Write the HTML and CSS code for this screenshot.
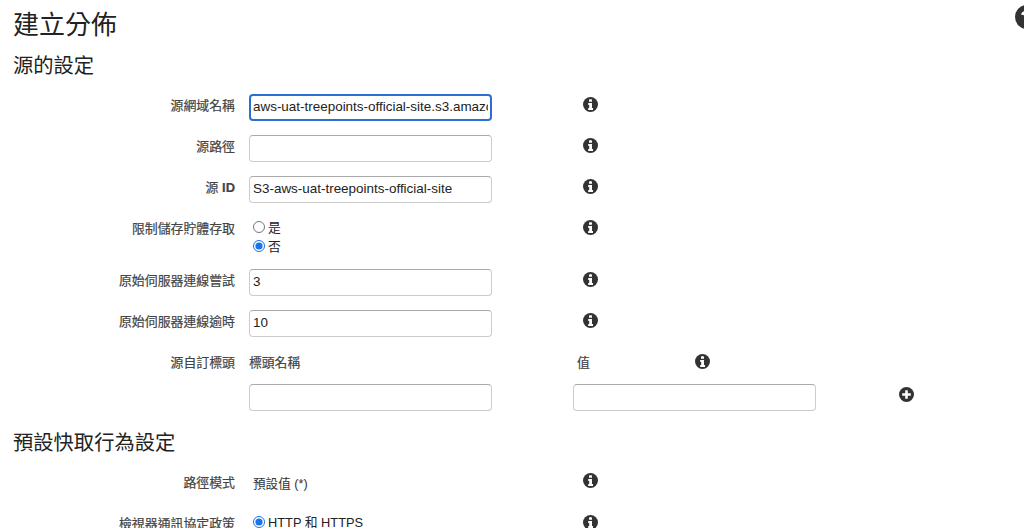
FILE: index.html
```html
<!DOCTYPE html>
<html lang="zh-Hant">

<head>
  <meta charset="UTF-8" />
  <title>建立分佈</title>
  <link rel="stylesheet" href="styles.css">
</head>

<body>
  <svg class="icon-defs" width="0" height="0">
    <symbol id="info" viewBox="0 0 15 15">
      <circle cx="7.5" cy="7.5" r="7.5" fill="#333" />
      <rect x="6" y="2.3" width="3" height="2.5" rx="0.4" fill="#fff" />
      <path d="M5.2 6h3.8v4.9h1v2h-4.8v-2h1v-2.9h-1z" fill="#fff" />
    </symbol>
    <symbol id="plus" viewBox="0 0 15 15">
      <circle cx="7.5" cy="7.5" r="7.5" fill="#333" />
      <path d="M6.2 3.2h2.6v3h3v2.6h-3v3h-2.6v-3h-3v-2.6h3z" fill="#fff" />
    </symbol>
  </svg>

  <div class="page">
    <header class="page-head">
      <h1>建立分佈</h1>
      <!-- help button runs off the right edge of the window -->
      <svg class="help-icon" viewBox="0 0 9 24">
        <circle cx="12" cy="12" r="12" fill="#333" />
        <path d="M6 9.5c.5-2 2.5-3.5 5-3.5h3v3h-2.5c-1 0-1.7.5-2 1.5z" fill="#fff" />
      </svg>
    </header>

    <h2 class="origin-title">源的設定</h2>

    <div class="form-row">
      <label class="field-label">源網域名稱</label>
      <input class="text-field is-focused" type="text" value="aws-uat-treepoints-official-site.s3.amazonaws.com" />
      <svg class="info-icon"><use href="#info" /></svg>
    </div>

    <div class="form-row">
      <label class="field-label">源路徑</label>
      <input class="text-field" type="text" />
      <svg class="info-icon"><use href="#info" /></svg>
    </div>

    <div class="form-row">
      <label class="field-label">源 <b>ID</b></label>
      <input class="text-field" type="text" value="S3-aws-uat-treepoints-official-site" />
      <svg class="info-icon"><use href="#info" /></svg>
    </div>

    <div class="form-row">
      <label class="field-label">限制儲存貯體存取</label>
      <div class="radio-group">
        <label class="radio-item"><input type="radio" name="restrict" />是</label>
        <label class="radio-item"><input type="radio" name="restrict" checked />否</label>
      </div>
      <svg class="info-icon"><use href="#info" /></svg>
    </div>

    <div class="form-row">
      <label class="field-label">原始伺服器連線嘗試</label>
      <input class="text-field" type="text" value="3" />
      <svg class="info-icon"><use href="#info" /></svg>
    </div>

    <div class="form-row">
      <label class="field-label">原始伺服器連線逾時</label>
      <input class="text-field" type="text" value="10" />
      <svg class="info-icon"><use href="#info" /></svg>
    </div>

    <div class="form-row header-row">
      <label class="field-label">源自訂標頭</label>
      <div class="col-title">標頭名稱</div>
      <div class="col-title value-title">值</div>
      <svg class="info-icon value-info"><use href="#info" /></svg>
    </div>

    <div class="form-row">
      <div class="field-label"></div>
      <input class="text-field" type="text" />
      <input class="text-field value-field" type="text" />
      <svg class="info-icon add-icon"><use href="#plus" /></svg>
    </div>

    <h2 class="behavior-title">預設快取行為設定</h2>

    <div class="form-row path-row">
      <label class="field-label">路徑模式</label>
      <div class="plain-value">預設值 (*)</div>
      <svg class="info-icon"><use href="#info" /></svg>
    </div>

    <div class="form-row">
      <label class="field-label">檢視器通訊協定政策</label>
      <div class="radio-group">
        <label class="radio-item"><input type="radio" name="viewer" checked />HTTP 和 HTTPS</label>
      </div>
      <svg class="info-icon"><use href="#info" /></svg>
    </div>
  </div>
</body>

</html>
```

FILE: styles.css
```css
html,
body {
  height: 100%;
  overflow: hidden;
}

body {
  margin: 0;
  background: #fff;
  color: #333;
  font-family: "Liberation Sans", "Noto Sans CJK TC", sans-serif;
  font-size: 13px;
}

.icon-defs {
  display: block;
}

.page {
  padding: 6px 0 0 14px;
}

.page-head {
  display: flex;
  justify-content: space-between;
  height: 46px;
}

h1 {
  margin: 0 0 0 -1px;
  font-size: 26px;
  font-weight: 400;
  line-height: 38px;
  color: #222;
}

.help-icon {
  width: 9px;
  height: 24px;
  margin-top: -1px;
}

h2 {
  margin: 0 0 0 -1px;
  font-size: 20.3px;
  font-weight: 400;
  line-height: 28px;
  color: #222;
}

.origin-title {
  margin-bottom: 14px;
}

.behavior-title {
  margin-top: 18px;
  margin-bottom: 14px;
}

.form-row {
  display: flex;
  align-items: flex-start;
  margin-bottom: 14px;
}

.field-label {
  flex: none;
  width: 221px;
  margin-right: 14px;
  padding-top: 2px;
  text-align: right;
  font-size: 12.9px;
  line-height: 20px;
  color: #444;
  -webkit-text-stroke: 0.2px #444;
}

.field-label b {
  font-weight: 700;
}

.text-field {
  flex: none;
  box-sizing: border-box;
  width: 243px;
  height: 27px;
  margin: 0;
  padding: 0 3px 2px;
  background: #fff;
  border: 1px solid #ccc;
  border-top-color: #aaa;
  border-radius: 4px;
  color: #222;
  font-family: inherit;
  font-size: 13.45px;
  outline: none;
}

.text-field.is-focused {
  border: 2px solid #2a6fd6;
  padding: 0 2px 2px;
}

.radio-group {
  flex: none;
  box-sizing: border-box;
  width: 243px;
  padding-left: 4px;
}

.radio-item {
  display: flex;
  align-items: center;
  height: 19px;
  color: #222;
  font-size: 12.8px;
}

.radio-item input {
  flex: none;
  width: 12px;
  height: 12px;
  margin: 0 3px 0 0;
  accent-color: #1a73e8;
}

.info-icon {
  flex: none;
  width: 15px;
  height: 15px;
  margin: 3px 0 0 91px;
}

.header-row {
  height: 24px;
  margin-bottom: 9px;
}

.col-title {
  flex: none;
  width: 243px;
  padding-top: 2px;
  font-size: 12.8px;
  line-height: 20px;
  color: #444;
  -webkit-text-stroke: 0.2px #444;
}

.value-title {
  width: 13px;
  margin-left: 85px;
}

.value-info {
  margin: 3px 0 0 105px;
}

.value-field {
  margin-left: 81px;
}

.add-icon {
  margin: 3px 0 0 83px;
}

.path-row {
  height: 27px;
}

.path-row .info-icon {
  margin-top: 2px;
}

.plain-value {
  flex: none;
  box-sizing: border-box;
  width: 243px;
  padding: 3px 0 0 4px;
  font-size: 12.6px;
  line-height: 20px;
  color: #333;
}
```
